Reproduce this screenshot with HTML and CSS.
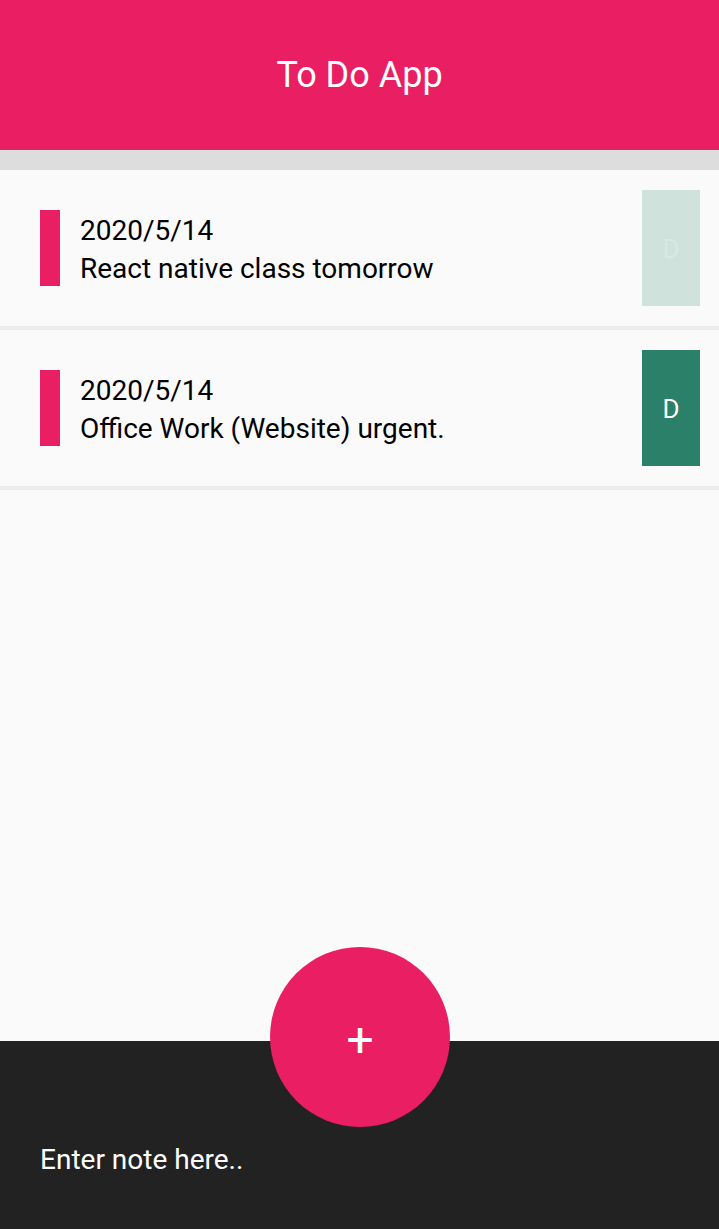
FILE: index.html
```html
<!DOCTYPE html>
<html lang="en">
<head>
<meta charset="utf-8">
<title>To Do App</title>
<link rel="stylesheet" href="styles.css">
</head>
<body>
<div class="app">
  <header class="header">
    <h1 class="header-title">To Do App</h1>
  </header>
  <main class="list">
    <div class="note">
      <div class="note-text">
        <div>2020/5/14</div>
        <div>React native class tomorrow</div>
      </div>
      <div class="note-delete is-pressed"><span>D</span></div>
    </div>
    <div class="note">
      <div class="note-text">
        <div>2020/5/14</div>
        <div>Office Work (Website) urgent.</div>
      </div>
      <div class="note-delete"><span>D</span></div>
    </div>
  </main>
  <footer class="footer">
    <button class="add-button" type="button">+</button>
    <div class="note-input">Enter note here..</div>
  </footer>
</div>
</body>
</html>
```

FILE: styles.css
```css
* { box-sizing: border-box; }
html, body { margin: 0; padding: 0; }
body {
  font-family: Roboto, "Noto Sans", sans-serif;
  background: #fafafa;
  color: #000;
}
.app {
  height: 1229px;
  display: flex;
  flex-direction: column;
}
.header {
  height: 170px;
  background: #e91e63;
  border-bottom: 20px solid #dddddd;
  display: flex;
  align-items: center;
  justify-content: center;
}
.header-title {
  margin: 0;
  font-weight: 400;
  font-size: 36px;
  line-height: 42px;
  color: #fff;
}
.list {
  flex: 1;
  background: #fafafa;
}
.note {
  display: flex;
  align-items: stretch;
  padding: 20px 19px 20px 40px;
  border-bottom: 4px solid #ededed;
}
.note-text {
  flex: 1;
  height: 76px;
  margin: 20px 0;
  padding: 2px 0 0 20px;
  border-left: 20px solid #e91e63;
  font-size: 28px;
  line-height: 38px;
}
.note-delete {
  width: 58px;
  background: #2a8068;
  color: #fff;
  display: flex;
  align-items: center;
  justify-content: center;
  font-size: 26px;
  padding-top: 2px;
}
.note-delete.is-pressed {
  background: #cfe2dc;
  color: #d9e9e4;
}
.footer {
  position: relative;
  height: 188px;
  background: #222222;
  padding: 100px 40px 50px;
}
.note-input {
  color: #fff;
  font-size: 28px;
  line-height: 38px;
}
.add-button {
  position: absolute;
  top: -94px;
  left: 270px;
  width: 180px;
  height: 180px;
  border: 0;
  border-radius: 50%;
  background: #e91e63;
  color: #fff;
  font-family: Roboto, sans-serif;
  font-size: 48px;
  line-height: 1;
  padding: 6px 0 0;
  display: flex;
  align-items: center;
  justify-content: center;
}
```
